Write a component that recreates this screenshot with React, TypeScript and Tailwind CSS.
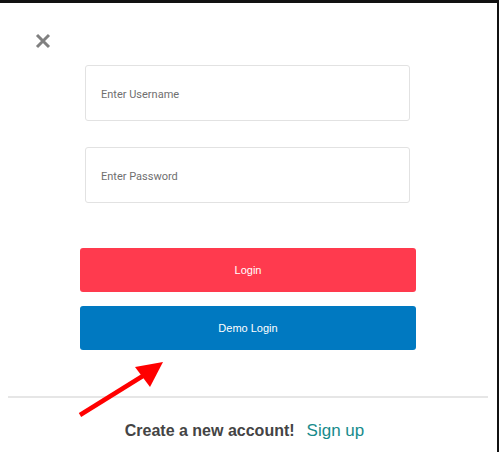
import React from "react";

export default function App() {
  return (
    <div className="w-[499px] h-[452px] bg-[#111] overflow-hidden" style={{ fontFamily: '"Liberation Sans", Arial, sans-serif' }}>
      <div className="relative mt-[3px] w-[497px] h-[449px] bg-white">
        <button className="absolute left-[35px] top-[30px] w-[16px] h-[16px] flex items-center justify-center">
          <svg width="16" height="16" viewBox="0 0 16 16">
            <path d="M2 2 L14 14 M14 2 L2 14" stroke="#808080" strokeWidth="3" />
          </svg>
        </button>
        <div className="flex flex-col pt-[62px]">
          <div className="flex flex-col gap-[26px] pl-[85px] w-[410px] box-content">
            <div className="h-[56px] w-[325px] border border-[#e2e2e2] rounded-[3px] flex items-center pl-[15px] pt-[4px] text-[11px] text-[#6f6f6f]" style={{ fontFamily: 'Roboto, "Liberation Sans", sans-serif' }}>
              Enter Username
            </div>
            <div className="h-[56px] w-[325px] border border-[#e2e2e2] rounded-[3px] flex items-center pl-[15px] pt-[4px] text-[11px] text-[#6f6f6f]" style={{ fontFamily: 'Roboto, "Liberation Sans", sans-serif' }}>
              Enter Password
            </div>
          </div>
          <div className="flex flex-col gap-[14px] pl-[80px] mt-[45px]">
            <div className="h-[44px] w-[336px] rounded-[3px] bg-[#ff3a4e] flex items-center justify-center text-white text-[11px]">
              Login
            </div>
            <div className="h-[44px] w-[336px] rounded-[3px] bg-[#0079c1] flex items-center justify-center text-white text-[11px]">
              Demo Login
            </div>
          </div>
          <div className="mt-[46px] ml-[8px] w-[480px] h-[2px] bg-[#e6e6e6]" />
          <div className="flex justify-center items-baseline gap-[12px] mt-[20px] pr-[8px]">
            <span className="text-[16px] font-bold text-[#444]">Create a new account!</span>
            <span className="text-[17px] text-[#178b8c]">Sign up</span>
          </div>
        </div>
        <svg className="absolute left-0 top-0 pointer-events-none" width="497" height="449" viewBox="0 3 497 449">
          <path d="M80 415 L146 374" stroke="#ff0000" strokeWidth="4.5" strokeLinecap="butt" />
          <polygon points="135,367 163,362 150,387" fill="#ff0000" />
        </svg>
      </div>
    </div>
  );
}
